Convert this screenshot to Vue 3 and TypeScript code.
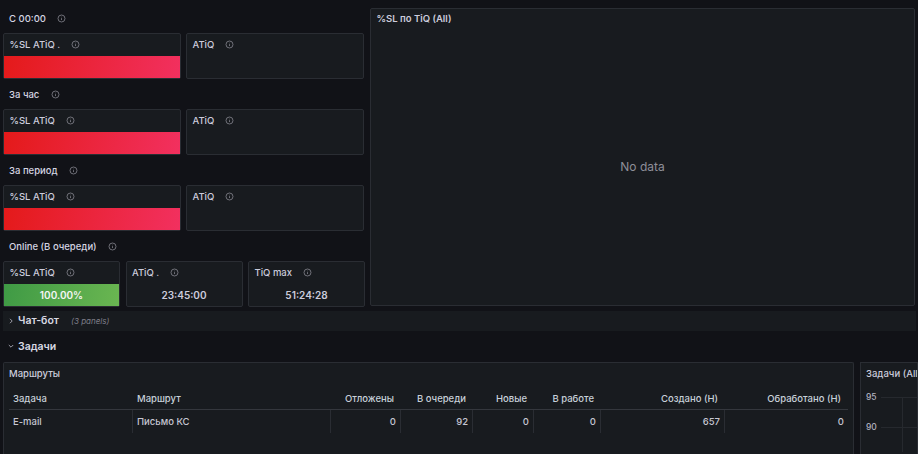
<script setup lang="ts">
interface Panel { title: string; kind: 'red' | 'green' | 'empty' | 'text'; value?: string }
interface Group { label: string; panels: Panel[]; thirds?: boolean }

const groups: Group[] = [
  { label: 'С 00:00', panels: [
    { title: '%SL ATiQ .', kind: 'red' },
    { title: 'ATiQ', kind: 'empty' },
  ] },
  { label: 'За час', panels: [
    { title: '%SL ATiQ', kind: 'red' },
    { title: 'ATiQ', kind: 'empty' },
  ] },
  { label: 'За период', panels: [
    { title: '%SL ATiQ', kind: 'red' },
    { title: 'ATiQ', kind: 'empty' },
  ] },
  { label: 'Online (В очереди)', thirds: true, panels: [
    { title: '%SL ATiQ', kind: 'green', value: '100.00%' },
    { title: 'ATiQ .', kind: 'text', value: '23:45:00' },
    { title: 'TiQ max', kind: 'text', value: '51:24:28' },
  ] },
]

const head = ['Задача', 'Маршрут', 'Отложены', 'В очереди', 'Новые', 'В работе', 'Создано (Н)', 'Обработано (Н)']
const row = ['E-mail', 'Письмо КС', '0', '92', '0', '0', '657', '0']
</script>

<template>
  <main class="page">
    <section class="top">
      <div class="left">
        <template v-for="g in groups" :key="g.label">
          <div class="label">
            <span>{{ g.label }}</span>
            <svg class="info" viewBox="0 0 16 16"><circle cx="8" cy="8" r="6.2" /><path d="M8 7.4v3.4M8 4.9v.9" /></svg>
          </div>
          <div class="cards" :class="{ thirds: g.thirds }">
            <article v-for="p in g.panels" :key="p.title" class="card">
              <header class="card-head">
                <span>{{ p.title }}</span>
                <svg class="info" viewBox="0 0 16 16"><circle cx="8" cy="8" r="6.2" /><path d="M8 7.4v3.4M8 4.9v.9" /></svg>
              </header>
              <div class="card-body" :class="p.kind">{{ p.value }}</div>
            </article>
          </div>
        </template>
      </div>
      <article class="nodata">
        <header class="nodata-title">%SL по TiQ (All)</header>
        <div class="nodata-body">No data</div>
      </article>
    </section>

    <div class="rowbar collapsed">
      <svg class="chev" viewBox="0 0 8 8"><path d="M3 1.8 5.2 4 3 6.2" /></svg>
      <span class="rowname">Чат-бот</span>
      <em>(3 panels)</em>
    </div>
    <div class="rowbar">
      <svg class="chev" viewBox="0 0 8 8"><path d="M1.8 3 4 5.2 6.2 3" /></svg>
      <span class="rowname">Задачи</span>
    </div>

    <section class="bottom">
      <article class="routes">
        <header class="routes-title">Маршруты</header>
        <div class="table">
          <div v-for="(h, i) in head" :key="h" class="th" :class="{ num: i > 1 }">{{ h }}</div>
          <div v-for="(c, i) in row" :key="i" class="td" :class="{ num: i > 1 }">{{ c }}</div>
        </div>
      </article>
      <article class="chart">
        <header class="chart-title">Задачи (All)</header>
        <div class="plot">
          <div class="tick"><span>95</span><i /></div>
          <div class="tick"><span>90</span><i /></div>
          <b class="vline" />
        </div>
      </article>
    </section>
  </main>
</template>

<style>
html, body { margin: 0; background: #111217; overflow: hidden; }
</style>

<style scoped>
.page {
  width: 918px;
  height: 454px;
  overflow: hidden;
  box-sizing: border-box;
  padding: 3px 0 0 3px;
  background: #111217;
  color: #ccccdc;
  font-family: Inter, "Noto Sans", sans-serif;
  font-size: 9.5px;
  font-weight: 500;
}
.top { display: flex; align-items: flex-start; gap: 5px; height: 304px; }
.left { width: 362px; flex: none; }
.label {
  height: 30px;
  padding-left: 6px;
  display: flex;
  align-items: center;
  gap: 11.5px;
  color: #d5d5e2;
}
.cards { display: grid; grid-template-columns: 178px 178px; column-gap: 5px; height: 46px; }
.cards.thirds { grid-template-columns: 117px 117px 117px; column-gap: 5.5px; }
.card {
  box-sizing: border-box;
  background: #181b1f;
  border: 1px solid #2a2d33;
  border-radius: 2px;
  display: flex;
  flex-direction: column;
  min-width: 0;
}
.card-head {
  height: 22px;
  flex: none;
  box-sizing: border-box;
  padding: 0 0 1px 5.5px;
  display: flex;
  align-items: center;
  gap: 11px;
  font-weight: 500;
}
.info { width: 9px; height: 9px; flex: none; fill: none; stroke: #8e8e98; stroke-width: 1.3; }
.card-body {
  flex: 1;
  display: flex;
  align-items: center;
  justify-content: center;
  font-size: 10px;
  font-weight: 600;
}
.card-body.red { background: linear-gradient(100deg, #e41a1a, #f2305f); }
.card-body.green { background: linear-gradient(100deg, #3f9a45, #6ab651); color: #f4f5f5; }
.nodata {
  width: 545px;
  height: 298px;
  margin-top: 5px;
  flex: none;
  box-sizing: border-box;
  background: #181b1f;
  border: 1px solid #2a2d33;
  border-radius: 2px;
  display: flex;
  flex-direction: column;
}
.nodata-title { height: 18px; padding-left: 5.5px; display: flex; align-items: center; font-weight: 600; }
.nodata-body {
  flex: 1;
  display: flex;
  align-items: center;
  justify-content: center;
  font-size: 12px;
  font-weight: 400;
  color: #8e8e98;
}
.rowbar {
  height: 20px;
  width: 913px;
  display: flex;
  align-items: center;
  gap: 3px;
  padding-left: 4px;
  box-sizing: border-box;
  margin-top: 4px;
  color: #d8d9e3;
}
.rowbar.collapsed { background: #181b1f; padding-bottom: 1px; }
.rowbar + .rowbar { margin-top: 5px; }
.chev { width: 8px; height: 8px; fill: none; stroke: #9d9da8; stroke-width: 1; }
.rowname { font-size: 10.5px; font-weight: 600; }
.rowbar em { margin-left: 9px; font-size: 8px; font-weight: 400; color: #7d7d88; }
.bottom { display: flex; gap: 6px; margin-top: 6px; height: 100px; }
.routes {
  width: 851px;
  flex: none;
  box-sizing: border-box;
  background: #181b1f;
  border: 1px solid #2a2d33;
  border-bottom: 0;
  border-radius: 2px 2px 0 0;
  padding: 0 5px;
}
.routes-title { height: 21px; display: flex; align-items: center; font-weight: 500; }
.table {
  display: grid;
  grid-template-columns: 124px 198px 70px 72px 61px 67px 124px 123px;
  margin-top: 4px;
}
.th {
  height: 22px;
  box-sizing: border-box;
  padding: 0 4px;
  display: flex;
  align-items: center;
  border-bottom: 1px solid #34373d;
  color: #c7d0d9;
  font-weight: 500;
}
.th.num { padding-right: 7px; }
.td {
  height: 23px;
  box-sizing: border-box;
  padding: 0 4px 1px;
  display: flex;
  align-items: center;
  border-right: 1px solid #2a2d33;
  color: #c6c6d2;
}
.td:last-child { border-right: 0; }
.num { justify-content: flex-end; }
.chart {
  flex: 1;
  min-width: 0;
  box-sizing: border-box;
  background: #181b1f;
  border: 1px solid #2a2d33;
  border-bottom: 0;
  overflow: hidden;
  padding-left: 5px;
}
.chart-title { height: 21px; display: flex; align-items: center; font-weight: 500; white-space: nowrap; }
.plot { position: relative; margin-top: 8px; }
.tick { height: 30px; display: flex; align-items: flex-start; gap: 4px; color: #b5b5c0; font-size: 8.5px; }
.tick span { line-height: 10px; }
.tick i { flex: 1; height: 1px; margin-top: 5px; background: #26292e; }
.vline { position: absolute; left: 36px; top: 5px; bottom: 0; width: 1px; background: #26292e; }
</style>
